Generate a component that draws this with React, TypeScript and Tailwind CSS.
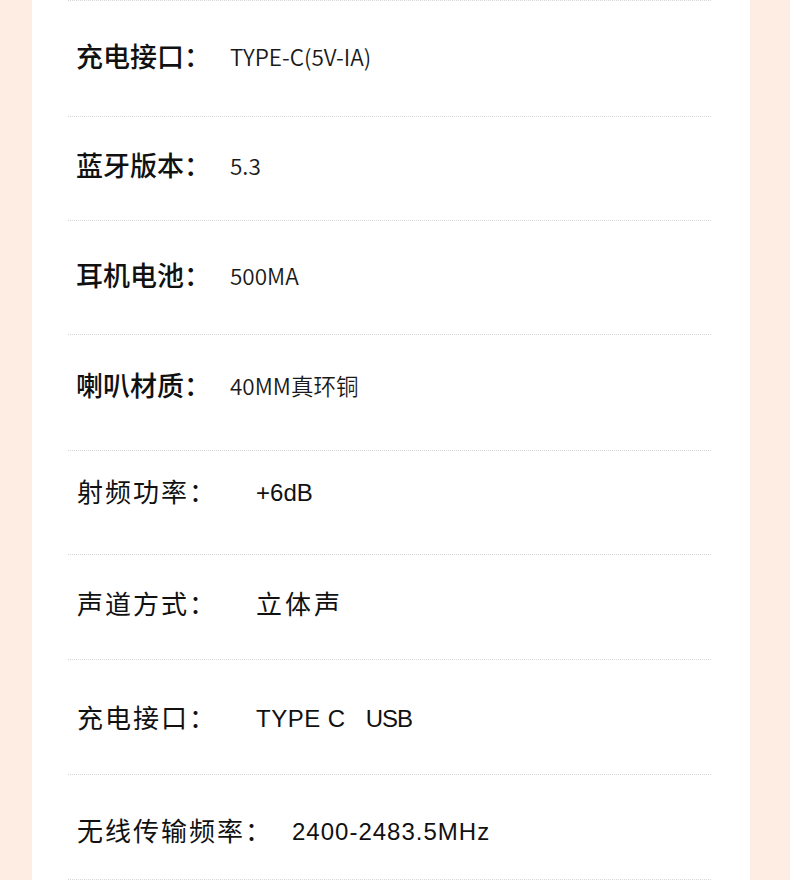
import React from "react";

type Row = {
  label: string;
  value: React.ReactNode;
  h: string;
  pt: string;
  style: "a" | "b";
  ml: string;
  vcls?: string;
};

const rows: Row[] = [
  { label: "充电接口：", value: "TYPE-C(5V-IA)", h: "h-[115px]", pt: "pt-[39px]", style: "a", ml: "ml-[19px]" },
  { label: "蓝牙版本：", value: "5.3", h: "h-[103px]", pt: "pt-[32px]", style: "a", ml: "ml-[19px]" },
  { label: "耳机电池：", value: "500MA", h: "h-[113px]", pt: "pt-[38px]", style: "a", ml: "ml-[19px]" },
  { label: "喇叭材质：", value: "40MM真环铜", h: "h-[115px]", pt: "pt-[34px]", style: "a", ml: "ml-[19px]" },
  { label: "射频功率：", value: "+6dB", h: "h-[103px]", pt: "pt-[26px]", style: "b", ml: "ml-[39px]", vcls: "text-[24px] tracking-[0px]" },
  { label: "声道方式：", value: "立体声", h: "h-[104px]", pt: "pt-[34px]", style: "b", ml: "ml-[39px]", vcls: "text-[26px] tracking-[3px]" },
  {
    label: "充电接口：",
    value: (
      <>
        <span>TYPE C</span>
        <span className="ml-[20px] tracking-[-1px]">USB</span>
      </>
    ),
    h: "h-[114px]",
    pt: "pt-[43px]",
    style: "b",
    ml: "ml-[39px]",
    vcls: "text-[24px] tracking-[0.5px]",
  },
  { label: "无线传输频率：", value: "2400-2483.5MHz", h: "h-[104px]", pt: "pt-[41px]", style: "b", ml: "ml-[19px]", vcls: "text-[24px] tracking-[1px]" },
];

function Line() {
  return <div className="h-px border-t border-dotted border-[#d6d6d6]" />;
}

export default function App() {
  return (
    <div className="w-[790px] h-[880px] bg-[#fdede2] overflow-hidden">
      <div className="ml-[32px] w-[718px] h-[880px] bg-white pl-[36px] pr-[39px]">
        <Line />
        {rows.map((r, i) => (
          <React.Fragment key={i}>
            <div className={`${r.h} ${r.pt}`}>
              {r.style === "a" ? (
                <div className="flex items-center h-[32px] pl-[8px] font-['Noto_Sans_CJK_SC',sans-serif]">
                  <span className="text-[27px] font-medium text-[#111] leading-[32px]">{r.label}</span>
                  <span className={`${r.ml} text-[22.5px] font-[350] text-[#1a1a1a] leading-[32px]`}>{r.value}</span>
                </div>
              ) : (
                <div className="flex items-center h-[32px] pl-[9px] font-['Liberation_Sans','Noto_Sans_CJK_SC',sans-serif]">
                  <span className="text-[26px] font-normal text-[#111] leading-[32px] tracking-[2px]">{r.label}</span>
                  <span className={`${r.ml} ${r.vcls} font-normal text-[#111] leading-[32px] whitespace-pre`}>{r.value}</span>
                </div>
              )}
            </div>
            <Line />
          </React.Fragment>
        ))}
      </div>
    </div>
  );
}
